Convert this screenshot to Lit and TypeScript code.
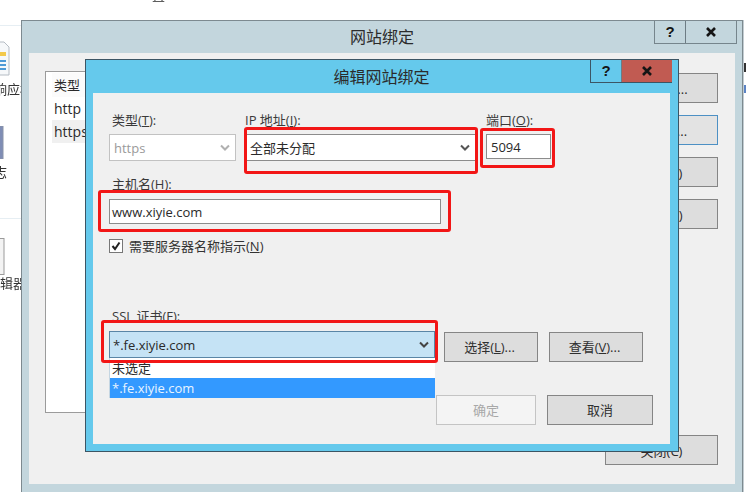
import { LitElement, html, css, svg } from "lit";
import { customElement } from "lit/decorators.js";

const cross = svg`<path d="M1 1 L9 9 M9 1 L1 9" fill="none" stroke="#151515" stroke-width="2.6"/>`;
const chevron = svg`<path d="M1 1.5 L5 5.5 L9 1.5" fill="none" stroke-width="2"/>`;

@customElement("app-root")
export class AppRoot extends LitElement {
  static styles = css`
    :host { display: block; width: 746px; height: 492px; position: relative; overflow: hidden; background: #fff; font: 13px/16px "Open Sans", "Noto Sans CJK SC", sans-serif; color: #2a2a2a; }
    .stage { position: absolute; inset: 0; filter: blur(0.45px); }
    .top-mark { position: absolute; left: 152px; top: -13px; font-size: 13px; }
    .side { position: absolute; left: 0; top: 0; width: 21px; height: 492px; overflow: hidden; }
    .side-line { position: absolute; left: 0; width: 21px; height: 1px; background: #e6eef3; }
    .side-text { position: absolute; white-space: nowrap; color: #333; }
    .side svg { position: absolute; left: 0; }
    .edge { position: absolute; left: 743px; top: 20px; width: 3px; height: 472px; background: #fff; }
    .edge-mark { position: absolute; left: 0; width: 3px; }

    .win { position: absolute; box-sizing: border-box; display: flex; flex-direction: column; }
    .win.outer { left: 21px; top: 20px; width: 722px; height: 480px; background: #c3d6dd; border: 1px solid #7d8a90; padding: 0 7px; }
    .win.dialog { left: 85px; top: 59px; width: 594px; height: 393px; background: #65c9ec; border: 1px solid #3c5564; padding: 0 8px 7px 7px; }
    .titlebar { flex: none; position: relative; text-align: center; font-size: 16px; color: #2b2b2b; }
    .outer .titlebar { height: 32px; line-height: 33px; }
    .dialog .titlebar { height: 33px; line-height: 34px; }
    .caps { position: absolute; top: 0; display: flex; height: 23px; box-sizing: border-box; }
    .outer .caps { right: -2px; border: 1px solid #76858c; border-top: 0; }
    .dialog .caps { right: -2px; border: 1px solid #3c5564; border-top: 0; border-right: 0; }
    .cap { display: flex; align-items: center; justify-content: center; box-sizing: border-box; font: 700 15px/20px "Liberation Sans", sans-serif; color: #151515; }
    .cap.help { width: 31px; border-right: 1px solid #6d7c84; }
    .cap.close { width: 50px; }
    .dialog .cap.close { background: #c15b52; }
    .cap svg { width: 10px; height: 10px; }

    .outer-body { flex: none; height: 431px; background: #f0f0f0; display: flex; box-sizing: border-box; padding: 18px 17px 19px 16px; justify-content: space-between; }
    .list { width: 540px; height: 342px; box-sizing: border-box; background: #fff; border: 1px solid #9b9b9b; padding: 1px 0 0 6px; }
    .list-head { height: 24px; line-height: 24px; padding-left: 2px; background: #fbfbfb; }
    .list-row { height: 23px; line-height: 23px; padding-left: 2px; font-size: 14px; }
    .list-row.sel { background: #f0f0f0; }
    .actions { width: 113px; display: flex; flex-direction: column; gap: 12px; padding-top: 2px; }
    .act { height: 30px; box-sizing: border-box; background: #dddddd; border: 1px solid #858585; text-align: center; line-height: 30px; }
    .act.focus { border-color: #4d90c4; background: #e3e3e3; }
    .act.last { margin-top: auto; }

    .client { flex: 1; background: #f0f0f0; box-sizing: border-box; padding: 19px 0 0 16px; display: flex; flex-direction: column; position: relative; }
    .row { display: flex; }
    .r1 { gap: 9px; }
    .field { display: flex; flex-direction: column; gap: 6px; }
    .label { height: 16px; color: #3a3a3a; white-space: pre; }
    .indent { padding-left: 3px; }
    .control { box-sizing: border-box; height: 27px; border: 1px solid #8c8c8c; background: #fff; display: flex; align-items: center; padding: 0 5px 0 4px; justify-content: space-between; }
    .control svg { width: 10px; height: 7px; stroke: #555; flex: none; }
    .w-type { width: 127px; }
    .w-ip { width: 231px; margin-right: 1px; }
    .w-port { width: 65px; height: 25px; padding-left: 4px; }
    .type-sel { border-color: #c2c2c2; color: #9a9a9a; padding-left: 4px; }
    .type-sel svg { stroke: #b0b0b0; }
    .host { margin-top: 15px; gap: 7px; }
    .w-host { width: 332px; height: 25px; padding-left: 2px; }
    .check { margin-top: 15px; display: flex; align-items: center; gap: 6px; height: 14px; color: #333; }
    .box { width: 14px; height: 14px; box-sizing: border-box; border: 1px solid #777; background: #fff; display: flex; align-items: center; justify-content: center; }
    .box svg { width: 10px; height: 10px; }
    .ssl { margin-top: 55px; gap: 7px; }
    .ssl-row { display: flex; align-items: flex-start; }
    .w-ssl { width: 326px; background: #c5e3f5; border-color: #5a86a6; padding-left: 3px; position: relative; }
    .w-ssl svg { stroke: #444; }
    .btn { box-sizing: border-box; height: 30px; background: #dddddd; border: 1px solid #858585; display: flex; align-items: center; justify-content: center; color: #2f2f2f; }
    .pick { width: 94px; margin-top: 1px; margin-left: 9px; padding-right: 3px; }
    .pick + .pick { margin-left: 11px; }
    .menu { position: absolute; left: -1px; top: 26px; width: 326px; box-sizing: border-box; background: #fff; border-left: 1px solid #c5d6e2; z-index: 1; }
    .opt { height: 20px; line-height: 20px; padding-left: 2px; }
    .opt.on { background: #3399ff; color: #e8f4ff; }
    .footer { margin-top: 33px; align-self: flex-end; display: flex; gap: 11px; padding-right: 17px; }
    .ok { width: 100px; background: #f4f4f4; border-color: #c4c4c4; color: #a8a8a8; }
    .cancel { width: 106px; }

    .mark { position: absolute; box-sizing: border-box; border: 3px solid #f21616; border-radius: 3px; z-index: 5; }
    .m-ip { left: 244px; top: 127px; width: 234px; height: 47px; }
    .m-port { left: 480px; top: 128px; width: 75px; height: 40px; }
    .m-host { left: 98px; top: 190px; width: 353px; height: 42px; }
    .m-ssl { left: 101px; top: 320px; width: 337px; height: 43px; }
  `;

  render() {
    return html`
      <div class="stage">
        <div class="top-mark">置</div>
        <div class="side">
          <div class="side-line" style="top:25px"></div>
          <svg style="top:41px" width="10" height="36" viewBox="0 0 10 36">
            <path d="M-4 1 H4 L9 6 V34 H-4 Z" fill="#f6f8fa" stroke="#b5bcc4"/>
            <rect x="-2" y="11" width="8" height="4" fill="#f3c94b"/>
            <path d="M-2 20 H6 M-2 24 H6 M-2 28 H6" stroke="#4f9ad6" stroke-width="2"/>
          </svg>
          <div class="side-text" style="left:-6px;top:81px">响应标</div>
          <svg style="top:126px" width="4" height="33" viewBox="0 0 4 33">
            <rect x="-3" y="0" width="6" height="33" fill="#7f8db5" stroke="#8a93a8"/>
          </svg>
          <div class="side-text" style="left:-6px;top:164px">志</div>
          <div class="side-line" style="top:218px"></div>
          <svg style="top:238px" width="5" height="37" viewBox="0 0 5 37">
            <rect x="-4" y="0.5" width="8" height="36" fill="#f3f3f3" stroke="#9a9a9a"/>
          </svg>
          <div class="side-text" style="left:0;top:275px">辑器</div>
        </div>
        <div class="edge">
          <div class="edge-mark" style="top:43px;height:9px;background:#333"></div>
          <div class="edge-mark" style="top:65px;height:8px;background:#5b83c4"></div>
          <div class="edge-mark" style="top:0;height:472px;width:1px;background:#c3cdd2"></div>
        </div>

        <section class="win outer">
          <div class="titlebar">网站绑定
            <div class="caps">
              <div class="cap help">?</div>
              <div class="cap close"><svg viewBox="0 0 10 10">${cross}</svg></div>
            </div>
          </div>
          <div class="outer-body">
            <div class="list">
              <div class="list-head">类型</div>
              <div class="list-row">http</div>
              <div class="list-row sel">https</div>
            </div>
            <div class="actions">
              <div class="act">添加(A)...</div>
              <div class="act focus">编辑(E)...</div>
              <div class="act">删除(R)</div>
              <div class="act">浏览(B)</div>
              <div class="act last">关闭(C)</div>
            </div>
          </div>
        </section>

        <section class="win dialog">
          <div class="titlebar">编辑网站绑定
            <div class="caps">
              <div class="cap help">?</div>
              <div class="cap close"><svg viewBox="0 0 10 10">${cross}</svg></div>
            </div>
          </div>
          <div class="client">
            <div class="row r1">
              <div class="field">
                <div class="label indent">类型(<u>T</u>):</div>
                <div class="control w-type type-sel">https<svg viewBox="0 0 10 7">${chevron}</svg></div>
              </div>
              <div class="field">
                <div class="label">IP 地址(<u>I</u>):</div>
                <div class="control w-ip">全部未分配<svg viewBox="0 0 10 7">${chevron}</svg></div>
              </div>
              <div class="field">
                <div class="label">端口(<u>O</u>):</div>
                <div class="control w-port">5094</div>
              </div>
            </div>
            <div class="field host">
              <div class="label indent">主机名(<u>H</u>):</div>
              <div class="control w-host">www.xiyie.com</div>
            </div>
            <div class="check">
              <div class="box"><svg viewBox="0 0 10 10"><path d="M1.5 5 L4 8 L8.5 1.5" fill="none" stroke="#222" stroke-width="2"/></svg></div>
              <span>需要服务器名称指示(<u>N</u>)</span>
            </div>
            <div class="field ssl">
              <div class="label indent">SSL 证书(<u>F</u>):</div>
              <div class="ssl-row">
                <div class="control w-ssl">*.fe.xiyie.com<svg viewBox="0 0 10 7">${chevron}</svg>
                  <div class="menu">
                    <div class="opt">未选定</div>
                    <div class="opt on">*.fe.xiyie.com</div>
                  </div>
                </div>
                <div class="btn pick">选择(<u>L</u>)...</div>
                <div class="btn pick">查看(<u>V</u>)...</div>
              </div>
            </div>
            <div class="footer">
              <div class="btn ok">确定</div>
              <div class="btn cancel">取消</div>
            </div>
          </div>
        </section>

        <div class="mark m-ip"></div>
        <div class="mark m-port"></div>
        <div class="mark m-host"></div>
        <div class="mark m-ssl"></div>
      </div>
    `;
  }
}
